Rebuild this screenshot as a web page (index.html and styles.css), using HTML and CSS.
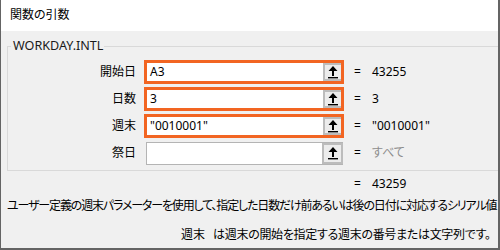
FILE: index.html
```html
<!DOCTYPE html>
<html lang="ja">
<head>
<meta charset="utf-8">
<link rel="stylesheet" href="styles.css">
</head>
<body>
<div class="window">
  <div class="titlebar">関数の引数</div>
  <fieldset class="group">
    <legend class="legend">WORKDAY.INTL</legend>
    <div class="row">
      <span class="label">開始日</span>
      <div class="field hl"><span class="ftext">A3</span><span class="refbtn"><svg width="10" height="13" viewBox="0 0 10 13"><path d="M5 0 L9.5 5 L6 5 L6 10 L4 10 L4 5 L0.5 5 Z" fill="#000"/><rect x="0" y="11" width="10" height="1.4" fill="#000"/></svg></span></div>
      <span class="eq">=</span><span class="val">43255</span>
    </div>
    <div class="row">
      <span class="label">日数</span>
      <div class="field hl"><span class="ftext">3</span><span class="refbtn"><svg width="10" height="13" viewBox="0 0 10 13"><path d="M5 0 L9.5 5 L6 5 L6 10 L4 10 L4 5 L0.5 5 Z" fill="#000"/><rect x="0" y="11" width="10" height="1.4" fill="#000"/></svg></span></div>
      <span class="eq">=</span><span class="val">3</span>
    </div>
    <div class="row">
      <span class="label">週末</span>
      <div class="field hl"><span class="ftext">"0010001"</span><span class="refbtn"><svg width="10" height="13" viewBox="0 0 10 13"><path d="M5 0 L9.5 5 L6 5 L6 10 L4 10 L4 5 L0.5 5 Z" fill="#000"/><rect x="0" y="11" width="10" height="1.4" fill="#000"/></svg></span></div>
      <span class="eq">=</span><span class="val">"0010001"</span>
    </div>
    <div class="row">
      <span class="label">祭日</span>
      <div class="fieldwrap"><div class="field plain"><span class="ftext"></span><span class="refbtn"><svg width="10" height="13" viewBox="0 0 10 13"><path d="M5 0 L9.5 5 L6 5 L6 10 L4 10 L4 5 L0.5 5 Z" fill="#000"/><rect x="0" y="11" width="10" height="1.4" fill="#000"/></svg></span></div></div>
      <span class="eq">=</span><span class="val muted">すべて</span>
    </div>
  </fieldset>
  <div class="result"><span class="eq">=</span><span class="val">43259</span></div>
  <div class="desc">ユーザー定義の週末パラメーターを使用して、指定した日数だけ前あるいは後の日付に対応するシリアル値</div>
  <div class="argdesc"><span class="argname">週末</span><span>は週末の開始を指定する週末の番号または文字列です。</span></div>
</div>
</body>
</html>
```

FILE: styles.css
```css
html, body {
  margin: 0;
  padding: 0;
}
body {
  width: 500px;
  height: 250px;
  overflow: hidden;
  font-family: "Noto Sans", "Noto Sans CJK JP", sans-serif;
  font-size: 12px;
  color: #000;
}
.window {
  box-sizing: border-box;
  width: 500px;
  height: 250px;
  background: #f0f0f0;
  border-left: 1px solid #646464;
  border-right: 2px solid #646464;
  border-bottom: 2px solid #646464;
  overflow: hidden;
  font-feature-settings: "palt";
}
.titlebar {
  height: 31px;
  line-height: 30px;
  background: #fff;
  padding-left: 9px;
  font-size: 12px;
}
.group {
  margin: 7px -30px 0 6px;
  padding: 6px 0 5px 4px;
  border: 1px solid #d9d9d9;
  border-right: none;
}
.legend {
  padding: 0 1px 0 2px;
  margin-left: -1px;
  line-height: 16px;
  font-size: 12.6px;
  color: #1a1a1a;
}
.row {
  display: flex;
  align-items: center;
  height: 24px;
  margin-bottom: 3px;
}
.row:last-child {
  margin-bottom: 0;
}
.label {
  width: 124px;
  margin-right: 8px;
  text-align: right;
  line-height: 16px;
}
.fieldwrap {
  width: 200px;
  height: 24px;
  box-sizing: border-box;
  padding: 1px 1px 0 2px;
}
.field {
  box-sizing: border-box;
  width: 200px;
  height: 24px;
  background: #fff;
  display: flex;
  align-items: stretch;
}
.field.hl {
  border: 3px solid #f26522;
}
.field.plain {
  width: 197px;
  height: 23px;
  border: 1px solid #b4b4b4;
  border-right: none;
}
.ftext {
  flex: 1;
  padding-left: 3px;
  line-height: 18px;
}
.refbtn {
  box-sizing: border-box;
  width: 19px;
  background: #ececec;
  border: 2px solid #bcbcbc;
  border-right: 1px solid #bcbcbc;
  display: flex;
  align-items: center;
  justify-content: center;
}
.field.plain .refbtn {
  width: 21px;
  border-right-width: 2px;
}
.field.hl .refbtn {
  border-right: none;
  width: 18px;
}
.eq {
  width: 18px;
  margin-left: 10px;
  line-height: 16px;
}
.val {
  line-height: 16px;
  white-space: nowrap;
}
.muted {
  color: #8d8d8d;
}
.result {
  display: flex;
  margin-top: 5px;
  padding-left: 343px;
  line-height: 16px;
}
.desc {
  margin-top: 6px;
  padding-left: 6px;
  line-height: 16px;
  white-space: nowrap;
  letter-spacing: -1.15px;
}
.argdesc {
  margin-top: 13px;
  padding-left: 180px;
  line-height: 16px;
  white-space: nowrap;
  letter-spacing: -0.3px;
}
.argname {
  margin-right: 8px;
  letter-spacing: 0;
}
```
